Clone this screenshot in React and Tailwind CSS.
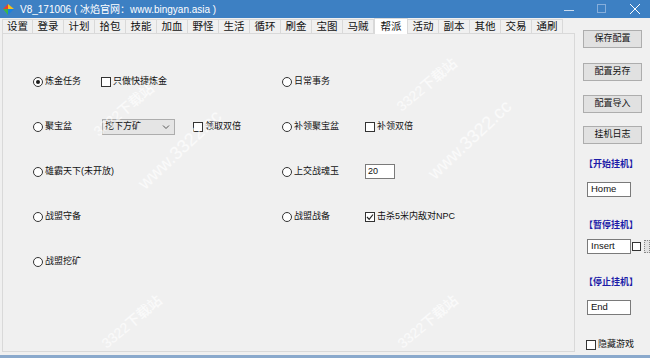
import React from 'react';

const FONT = "font-['Liberation_Sans','Noto_Sans_CJK_SC',sans-serif]";

const tabs = ['设置', '登录', '计划', '拾包', '技能', '加血', '野怪', '生活', '循环', '刷金', '宝图', '马贼', '帮派', '活动', '副本', '其他', '交易', '通刷'];

const Radio = ({ checked, label }) => (
  <div className="flex items-center gap-[2px] whitespace-nowrap">
    <span className="w-[10px] h-[10px] rounded-full border border-[#333] bg-white flex items-center justify-center shrink-0">
      {checked && <span className="w-[4px] h-[4px] rounded-full bg-[#1a1a1a]" />}
    </span>
    <span>{label}</span>
  </div>
);

const Check = ({ checked, label }) => (
  <div className="flex items-center gap-[2px] whitespace-nowrap">
    <span className="w-[10px] h-[10px] border border-[#333] bg-white flex items-center justify-center shrink-0">
      {checked && (
        <svg width="8" height="8" viewBox="0 0 8 8">
          <path d="M1 4 L3.2 6.3 L7 1.5" fill="none" stroke="#222" strokeWidth="1.2" />
        </svg>
      )}
    </span>
    {label && <span>{label}</span>}
  </div>
);

const Row = ({ a, b, c, d }) => (
  <div className="flex items-center h-[45px]">
    <div className="w-[68px]">{a}</div>
    <div className="w-[181px]">{b}</div>
    <div className="w-[83px]">{c}</div>
    <div className="flex-1">{d}</div>
  </div>
);

const SideButton = ({ children, className }) => (
  <div className={`w-[59px] h-[18px] bg-[#e1e1e1] border border-[#adadad] flex items-center justify-center text-[9px] ${className}`}>
    {children}
  </div>
);

const KeyInput = ({ value }) => (
  <div className="w-[44px] h-[15px] bg-white border border-[#7a7a7a] flex items-center pl-[3px] text-[9.5px]">
    {value}
  </div>
);

// faint diagonal site watermark laid over the window
const Watermark = ({ text, x, y, size, deg }) => (
  <span
    className="absolute whitespace-nowrap font-medium text-white/65"
    style={{ left: x, top: y, fontSize: size, transform: `translate(-50%,-50%) rotate(${deg}deg)` }}
  >
    {text}
  </span>
);

export default function App() {
  return (
    <div className={`relative w-[650px] h-[358px] overflow-hidden bg-[#f0f0f0] text-[#111] flex flex-col ${FONT}`}>
      {/* Title bar */}
      <div className="h-[18px] bg-[#3d80c3] flex items-center shrink-0">
        <svg width="13" height="13" viewBox="0 0 13 13" className="ml-[2px]">
          <path d="M1 6 L6 1 L6 6 Z" fill="#e8412c" />
          <path d="M6 1 L12 6 L6 6 Z" fill="#f5c21b" />
          <path d="M12 6 L6 12 L6 6 Z" fill="#1b7fe0" />
          <path d="M6 12 L1 6 L6 6 Z" fill="#3cb54a" />
        </svg>
        <span className="ml-[5px] text-white text-[10px]">V8_171006 ( 冰焰官网：www.bingyan.asia )</span>
        <div className="ml-auto flex items-center h-full">
          <svg width="12" height="12" viewBox="0 0 12 12" className="mr-[22px]">
            <path d="M1 7.5 H11" stroke="#c9dbef" strokeWidth="1" />
          </svg>
          <svg width="10" height="10" viewBox="0 0 10 10" className="mr-[22px]">
            <rect x="0.5" y="0.5" width="8" height="8" fill="none" stroke="#86aedb" />
          </svg>
          <svg width="12" height="12" viewBox="0 0 12 12" className="mr-[9px]">
            <path d="M1 1 L11 11 M11 1 L1 11" stroke="#ffffff" strokeWidth="1" />
          </svg>
        </div>
      </div>

      <div className="flex-1 flex border-b-[3px] border-[#8aa9cc]">
        {/* Tab control */}
        <div className="w-[576px] flex flex-col pl-[2px]">
          <div className="h-[15px] flex items-end">
            {tabs.map((t) => {
              const active = t === '帮派';
              return (
                <div
                  key={t}
                  className={
                    active
                      ? 'w-[34px] h-[16px] -mb-px relative z-10 bg-white border border-b-0 border-[#d9d9d9] flex items-center justify-center text-[10.5px]'
                      : 'w-[31px] h-[14px] bg-[#f0f0f0] border border-b-0 border-l-0 first:border-l border-[#d9d9d9] flex items-center justify-center text-[10.5px]'
                  }
                >
                  {t}
                </div>
              );
            })}
          </div>
          <div className="flex-1 border border-[#d9d9d9] mb-[3px] pt-[25px] pl-[30px] text-[9px]">
            <Row
              a={<Radio checked label="炼金任务" />}
              b={<Check label="只做快捷炼金" />}
              c={<Radio label="日常事务" />}
            />
            <Row
              a={<Radio label="聚宝盆" />}
              b={
                <div className="flex items-center">
                  <div className="ml-[1px] w-[73px] h-[16px] bg-[#e5e5e5] border border-[#adadad] flex items-center justify-between px-[2px]">
                    <span>挖下方矿</span>
                    <svg width="8" height="6" viewBox="0 0 8 6" className="mr-[2px]">
                      <path d="M1 1.5 L4 4.5 L7 1.5" fill="none" stroke="#555" strokeWidth="1" />
                    </svg>
                  </div>
                  <div className="ml-[18px]">
                    <Check label="领取双倍" />
                  </div>
                </div>
              }
              c={<Radio label="补领聚宝盆" />}
              d={<Check label="补领双倍" />}
            />
            <Row
              a={<Radio label="雄霸天下(未开放)" />}
              c={<Radio label="上交战魂玉" />}
              d={
                <div className="w-[30px] h-[15px] bg-white border border-[#7a7a7a] flex items-center pl-[2px] text-[9px]">20</div>
              }
            />
            <Row
              a={<Radio label="战盟守备" />}
              c={<Radio label="战盟战备" />}
              d={<Check checked label="击杀5米内敌对NPC" />}
            />
            <Row a={<Radio label="战盟挖矿" />} />
          </div>
        </div>

        {/* Side panel */}
        <div className="flex-1 flex flex-col pl-[8px]">
          <SideButton className="mt-[12px]">保存配置</SideButton>
          <SideButton className="mt-[15px]">配置另存</SideButton>
          <SideButton className="mt-[14px]">配置导入</SideButton>
          <SideButton className="mt-[13px]">挂机日志</SideButton>
          <div className="mt-[15px] ml-[1px] h-[12px] flex items-center text-[9px] font-bold text-[#1c1ca8]">【开始挂机】</div>
          <div className="mt-[11px] ml-[4px]"><KeyInput value="Home" /></div>
          <div className="mt-[23px] ml-[1px] h-[12px] flex items-center text-[9px] font-bold text-[#1c1ca8]">【暂停挂机】</div>
          <div className="mt-[7px] ml-[4px] flex items-center">
            <KeyInput value="Insert" />
            <span className="w-[9px] h-[9px] border border-[#333] bg-white ml-[1px]" />
            <span className="w-[6px] h-[13px] border border-dotted border-[#888] bg-[#e1e1e1] ml-[3px]" />
          </div>
          <div className="mt-[23px] ml-[1px] h-[12px] flex items-center text-[9px] font-bold text-[#1c1ca8]">【停止挂机】</div>
          <div className="mt-[11px] ml-[4px]"><KeyInput value="End" /></div>
          <div className="mt-[23px] ml-[3px] text-[9px]">
            <Check label="隐藏游戏" />
          </div>
        </div>
      </div>

      {/* Watermark overlay */}
      <div className="pointer-events-none absolute inset-0 overflow-hidden">
        <Watermark text="3322下载站" x={124} y={110} size={14} deg={-40} />
        <Watermark text="www.3322.cc" x={180} y={150} size={18} deg={-43} />
        <Watermark text="3322下载站" x={427} y={85} size={14} deg={-40} />
        <Watermark text="www.3322.cc" x={470} y={140} size={18} deg={-43} />
        <Watermark text="3322下载站" x={132} y={322} size={14} deg={-40} />
        <Watermark text="3322下载站" x={428} y={322} size={14} deg={-40} />
      </div>
    </div>
  );
}
